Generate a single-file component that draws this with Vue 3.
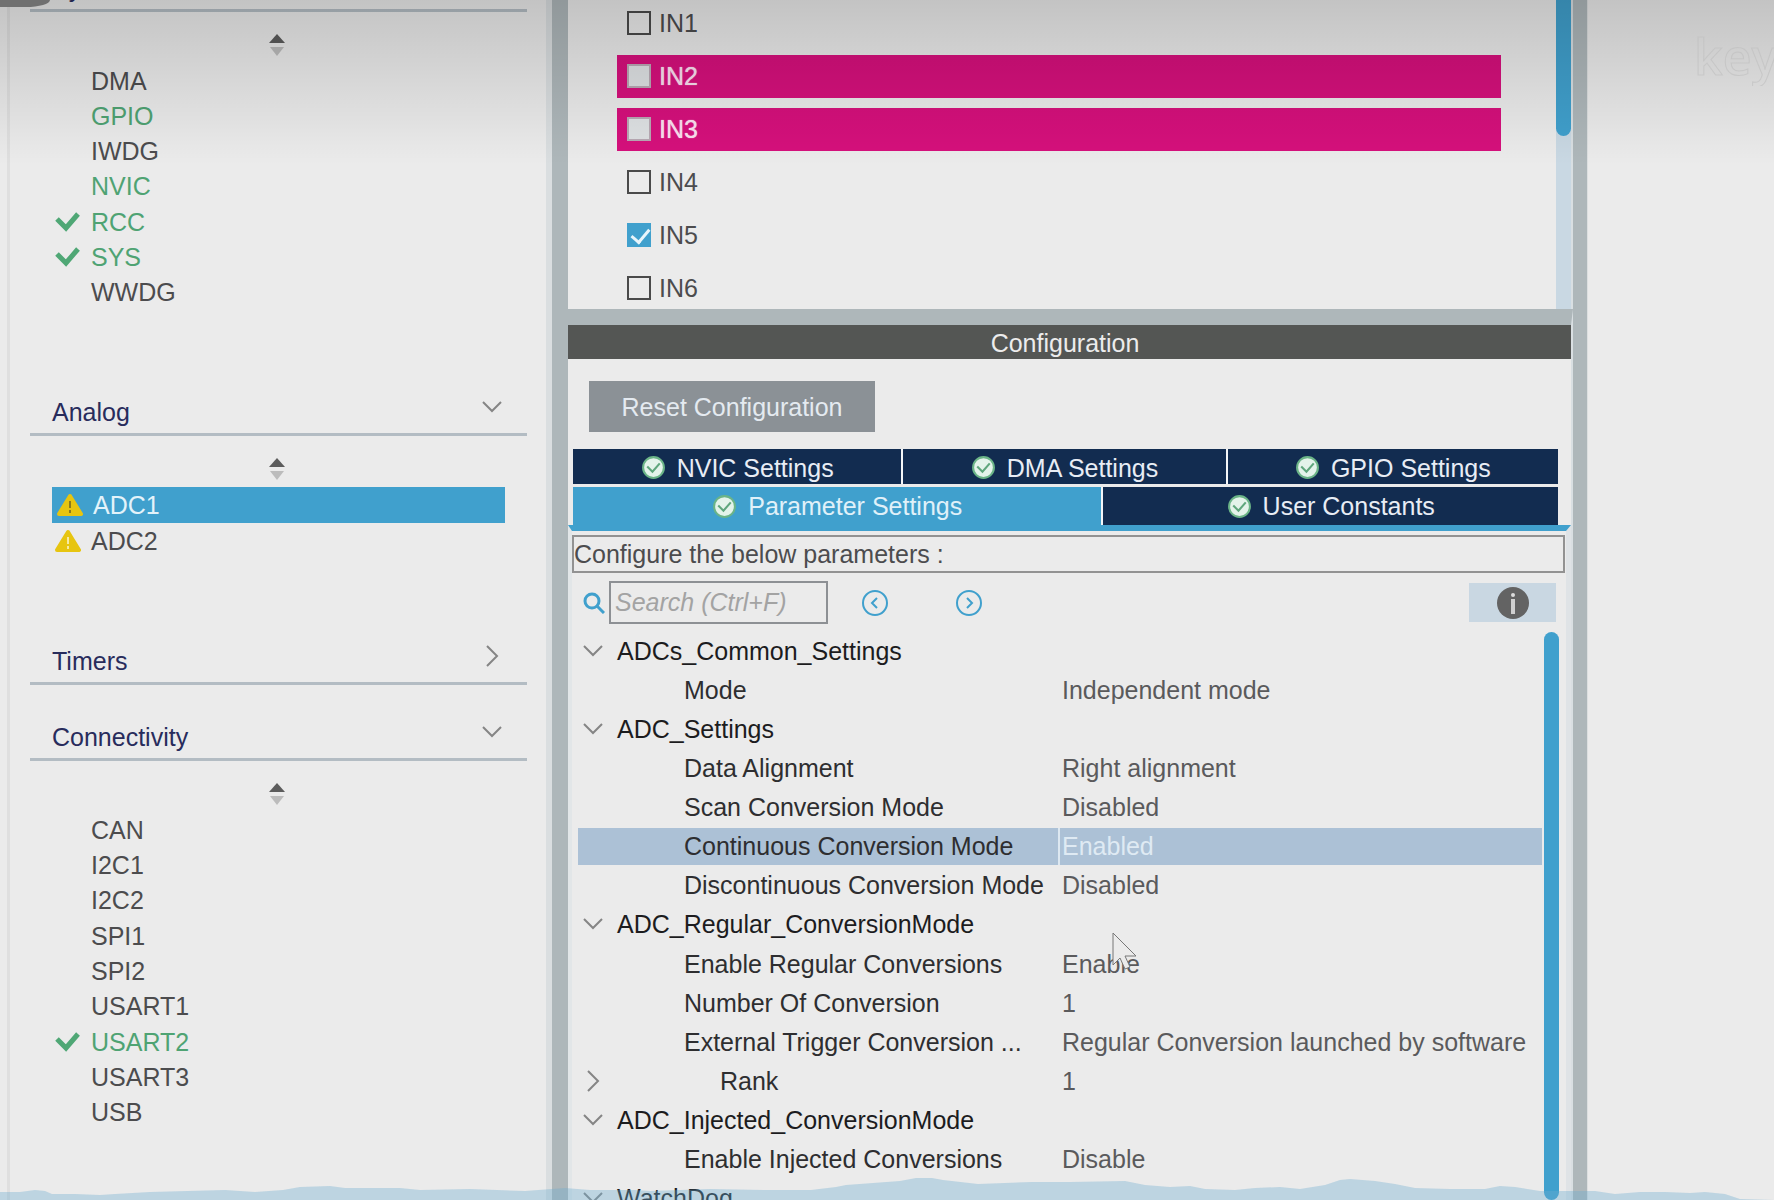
<script setup>
import { ref } from 'vue'

const sections = [
  {
    name: 'System Core',
    open: true,
    clipped: true,
    items: [
      { name: 'DMA' },
      { name: 'GPIO', state: 'used' },
      { name: 'IWDG' },
      { name: 'NVIC', state: 'used' },
      { name: 'RCC', state: 'used', icon: 'check' },
      { name: 'SYS', state: 'used', icon: 'check' },
      { name: 'WWDG' },
    ],
  },
  {
    name: 'Analog',
    open: true,
    items: [
      { name: 'ADC1', icon: 'warning', state: 'selected' },
      { name: 'ADC2', icon: 'warning' },
    ],
  },
  { name: 'Timers', open: false, items: [] },
  {
    name: 'Connectivity',
    open: true,
    items: [
      { name: 'CAN' },
      { name: 'I2C1' },
      { name: 'I2C2' },
      { name: 'SPI1' },
      { name: 'SPI2' },
      { name: 'USART1' },
      { name: 'USART2', state: 'used', icon: 'check' },
      { name: 'USART3' },
      { name: 'USB' },
    ],
  },
]

const channels = ref([
  { name: 'IN1', on: false },
  { name: 'IN2', on: false, conflict: true },
  { name: 'IN3', on: false, conflict: true },
  { name: 'IN4', on: false },
  { name: 'IN5', on: true },
  { name: 'IN6', on: false },
])

const tabRows = [
  [{ name: 'NVIC Settings' }, { name: 'DMA Settings' }, { name: 'GPIO Settings' }],
  [{ name: 'Parameter Settings', active: true }, { name: 'User Constants' }],
]

const search = ref('')

const params = [
  { name: 'ADCs_Common_Settings', kind: 'group', arrow: 'down' },
  { name: 'Mode', value: 'Independent mode' },
  { name: 'ADC_Settings', kind: 'group', arrow: 'down' },
  { name: 'Data Alignment', value: 'Right alignment' },
  { name: 'Scan Conversion Mode', value: 'Disabled' },
  { name: 'Continuous Conversion Mode', value: 'Enabled', selected: true },
  { name: 'Discontinuous Conversion Mode', value: 'Disabled' },
  { name: 'ADC_Regular_ConversionMode', kind: 'group', arrow: 'down' },
  { name: 'Enable Regular Conversions', value: 'Enable' },
  { name: 'Number Of Conversion', value: '1' },
  { name: 'External Trigger Conversion ...', value: 'Regular Conversion launched by software' },
  { name: 'Rank', value: '1', kind: 'nested', arrow: 'right' },
  { name: 'ADC_Injected_ConversionMode', kind: 'group', arrow: 'down' },
  { name: 'Enable Injected Conversions', value: 'Disable' },
  { name: 'WatchDog', kind: 'group', arrow: 'down' },
]
</script>

<template>
  <div class="app">
    <nav class="sidebar">
      <section v-for="s in sections" :key="s.name">
        <button class="section-head" :class="{ clipped: s.clipped }" :aria-expanded="s.open">
          <span>{{ s.name }}</span>
          <svg v-if="s.open" class="arrow" viewBox="0 0 22 22"><path d="M2 6 L11 15 L20 6" /></svg>
          <svg v-else class="arrow" viewBox="0 0 22 22"><path d="M6 1 L16 11 L6 21" /></svg>
        </button>
        <template v-if="s.open">
          <div class="sorter">
            <button aria-label="Sort">
              <svg viewBox="0 0 16 22"><path d="M8 0 L16 9 H0 Z" fill="#5c5c5c" /><path d="M8 22 L1 13 H15 Z" fill="#bcbcbc" /></svg>
            </button>
          </div>
          <ul class="items" :class="'rows-' + s.items.length">
            <li v-for="i in s.items" :key="i.name">
              <button class="item" :class="i.state">
                <span class="mark">
                  <svg v-if="i.icon === 'check'" viewBox="0 0 26 22"><path d="M2 8 L11 17 L23 3" fill="none" stroke="#4fa775" stroke-width="5" /></svg>
                  <svg v-if="i.icon === 'warning'" viewBox="0 0 26 22">
                    <path d="M13 2 L24 20 H2 Z" fill="#e7c510" stroke="#e7c510" stroke-width="4" stroke-linejoin="round" />
                    <path d="M13 7 V14 M13 16 V19" :stroke="i.state ? '#8b7a1d' : '#f6eaa6'" stroke-width="2" />
                  </svg>
                </span>
                {{ i.name }}
              </button>
            </li>
          </ul>
        </template>
      </section>
    </nav>

    <main class="center">
      <section class="mode">
        <div class="channels">
          <div v-for="c in channels" :key="c.name" class="channel">
            <label :class="{ conflict: c.conflict }">
              <input v-model="c.on" type="checkbox" :disabled="c.conflict" />
              {{ c.name }}
            </label>
          </div>
        </div>
        <div class="mode-scroll"><div class="mode-thumb"></div></div>
      </section>

      <section class="config">
        <h2>Configuration</h2>
        <div class="config-body">
          <button class="reset">Reset Configuration</button>
          <div class="tabs">
            <div v-for="(row, r) in tabRows" :key="r" class="tab-row" :class="'tab-row-' + r">
              <button v-for="t in row" :key="t.name" class="tab" :class="{ active: t.active }">
                <svg viewBox="0 0 24 24">
                  <circle cx="12" cy="12" r="10" fill="#e4f3ea" stroke="#6bb487" stroke-width="2" />
                  <path d="M6 11 L11 16 L18 8" fill="none" stroke="#5fa67c" stroke-width="2" />
                </svg>
                {{ t.name }}
              </button>
            </div>
          </div>
          <div class="inner">
            <p class="hint">Configure the below parameters :</p>
            <div class="toolbar">
              <label for="param-search" aria-label="Search">
                <svg class="lens" viewBox="0 0 22 22"><circle cx="9" cy="9" r="7" /><path d="M14 14 L21 21" /></svg>
              </label>
              <input id="param-search" v-model="search" type="text" placeholder="Search (Ctrl+F)" />
              <button class="step prev" aria-label="Previous">
                <svg viewBox="0 0 26 26"><circle cx="13" cy="13" r="12" /><path d="M15 8 L10 13 L15 18" /></svg>
              </button>
              <button class="step next" aria-label="Next">
                <svg viewBox="0 0 26 26"><circle cx="13" cy="13" r="12" /><path d="M11 8 L16 13 L11 18" /></svg>
              </button>
              <button class="info" aria-label="Information">
                <svg viewBox="0 0 32 32">
                  <circle cx="16" cy="16" r="16" fill="#636363" />
                  <circle cx="16" cy="8" r="2" fill="#dcdcdc" />
                  <path d="M16 12 V27" stroke="#d0d0d0" stroke-width="4" />
                </svg>
              </button>
            </div>
            <div class="tree">
              <table>
                <colgroup><col class="col-name" /><col /></colgroup>
                <tbody>
                  <tr v-for="p in params" :key="p.name" :class="{ selected: p.selected }">
                    <td :class="p.kind">
                      <div class="cell">
                        <span class="twist">
                          <svg v-if="p.arrow === 'down'" class="arrow" viewBox="0 0 22 22"><path d="M2 6 L11 15 L20 6" /></svg>
                          <svg v-if="p.arrow === 'right'" class="arrow" viewBox="0 0 22 22"><path d="M6 1 L16 11 L6 21" /></svg>
                        </span>
                        <span class="label">{{ p.name }}</span>
                      </div>
                    </td>
                    <td class="value"><div class="cell">{{ p.value }}</div></td>
                  </tr>
                </tbody>
              </table>
              <div class="tree-thumb"></div>
            </div>
          </div>
        </div>
      </section>
    </main>

    <aside class="right"></aside>

    <svg class="cursor" viewBox="0 0 26 40"><path d="M1 1 V33 L8 26 L13 37 L18 35 L13 24 H24 Z" fill="#ebebeb" stroke="#777" stroke-width="1" /></svg>
    <div class="shade"></div>
    <div class="corner"></div>
    <div class="watermark">key</div>
    <svg class="wave" viewBox="0 0 1774 24" preserveAspectRatio="none">
      <path d="M0 16 L20 16 L35 14 L45 15 L52 18 L75 18 L100 19 L115 18 L150 16 L225 14 L255 16 L283 14 L300 11 L330 10 L345 12 L400 12 L420 14 L470 13 L525 15 L565 12 L590 14 L635 14 L650 15 L710 13 L766 14 L811 14 L836 11 L846 9 L900 5 L916 2 L932 2 L943 4 L978 8 L1032 6 L1070 6 L1125 5 L1145 9 L1170 11 L1190 10 L1205 13 L1235 14 L1255 12 L1280 11 L1300 13 L1325 9 L1340 4 L1350 3 L1375 5 L1395 8 L1415 12 L1450 13 L1485 13 L1500 10 L1515 11 L1540 15 L1595 15 L1615 18 L1640 16 L1665 16 L1690 17 L1705 16 L1725 18 L1740 23 L1774 24 H0 Z" fill="#6dabd1" fill-opacity=".36" />
    </svg>
  </div>
</template>

<style>
body {
  margin: 0;
  background: #ebebeb;
}
</style>

<style scoped>
.app,
.app * {
  box-sizing: border-box;
}
.app {
  position: relative;
  display: grid;
  grid-template-columns: minmax(0, 552fr) minmax(0, 1035fr) minmax(0, 187fr);
  height: 100vh;
  overflow: hidden;
  background: #ebebeb;
  color: #4c4c4e;
  font-family: "Liberation Sans", Arial, sans-serif;
  font-size: 25px;
  line-height: 30px;
}
button {
  padding: 0;
  border: 0;
  background: none;
  color: inherit;
  font: inherit;
}
svg {
  display: block;
}
.arrow {
  width: 22px;
  height: 22px;
  fill: none;
  stroke: #858585;
  stroke-width: 2;
}

/* sidebar */
.sidebar {
  margin-left: 7px;
  padding: 0 19px 0 20px;
  border-left: 3px solid #dfdfdf;
  border-right: 6px solid #dadee0;
  overflow: hidden;
}
.section-head {
  display: flex;
  justify-content: space-between;
  align-items: flex-end;
  width: 100%;
  height: 76px;
  padding: 0 24px 6px 22px;
  border-bottom: 3px solid #b3bcc3;
  color: #282c5c;
  overflow: hidden;
}
.section-head.clipped {
  height: 12px;
}
.section-head .arrow {
  margin-bottom: 9px;
}
.sorter {
  display: flex;
  justify-content: center;
  align-items: flex-start;
  height: 51px;
  padding: 22px 4px 0 0;
}
.sorter svg {
  width: 16px;
  height: 22px;
}
.items {
  display: grid;
  grid-auto-rows: 1fr;
  margin: 0 22px 50px;
  padding: 0;
  list-style: none;
}
.rows-7 { height: 247px; }
.rows-2 { height: 72px; }
.rows-9 { height: 318px; }
.item {
  display: flex;
  align-items: center;
  width: 100%;
  height: 100%;
  padding-left: 3px;
}
.item .mark {
  width: 36px;
}
.item .mark svg {
  width: 26px;
  height: 24px;
}
.item.used { color: #4fa373; }
.item.selected {
  padding-left: 5px;
  background: #40a0cd;
  color: #e3f3fa;
}

/* mode panel */
.center {
  display: flex;
  flex-direction: column;
  min-width: 0;
  height: 100vh;
  border-left: 16px solid #aeb7ba;
  border-right: 14px solid #aeb7ba;
}
.mode {
  display: flex;
  justify-content: space-between;
  flex: 0 0 309px;
  border-right: 2px solid #d9dfe2;
  overflow: hidden;
}
.channels {
  display: grid;
  grid-auto-rows: 1fr;
  flex: 1;
  height: 317px;
  margin: -3px 55px 0 49px;
}
.channel {
  display: flex;
  align-items: center;
}
.channel label {
  display: flex;
  align-items: center;
  gap: 8px;
  width: 100%;
  height: 43px;
  padding-left: 10px;
}
.channel input {
  appearance: none;
  position: relative;
  flex: none;
  width: 24px;
  height: 24px;
  margin: 0;
  border: 2px solid #4a4a4a;
}
.channel input:checked {
  border-color: #40a0cd;
  background: #40a0cd;
}
.channel input:checked::after {
  content: "";
  position: absolute;
  left: 6px;
  top: 0;
  width: 8px;
  height: 15px;
  border: solid #e8f5fb;
  border-width: 0 3px 3px 0;
  rotate: 40deg;
}
.channel .conflict {
  background: #d6107c;
  color: #fbe0ef;
  text-shadow: 0 0 1px #fbe0ef;
}
.channel .conflict input {
  border-color: #b9a9b4;
  background: #dfe2e4;
}
.mode-scroll {
  width: 15px;
  background: #c9d8e3;
}
.mode-thumb {
  height: 136px;
  border-radius: 0 0 8px 8px;
  background: #40a0cd;
}

/* configuration panel */
.config {
  display: flex;
  flex-direction: column;
  flex: 1;
  min-height: 0;
  border-top: 16px solid #aeb7ba;
  border-right: 2px solid #d9dfe2;
}
h2 {
  margin: 0;
  padding: 3px 9px 1px 0;
  background: #545654;
  color: #ececec;
  font-size: 25px;
  font-weight: 400;
  text-align: center;
}
.config-body {
  display: flex;
  flex-direction: column;
  align-items: flex-start;
  flex: 1;
  min-height: 0;
}
.reset {
  width: 286px;
  height: 51px;
  margin: 22px 0 17px 21px;
  background: #8b9196;
  color: #e4eaf0;
}
.tabs {
  display: flex;
  flex-direction: column;
  gap: 3px;
  width: 100%;
  padding: 0 13px 0 5px;
}
.tab-row {
  display: grid;
  gap: 2px;
  background: #f4f6f8;
}
.tab-row-0 { grid-template-columns: 328fr 322fr 330fr; }
.tab-row-1 { grid-template-columns: 529fr 455fr; }
.tab {
  display: flex;
  justify-content: center;
  align-items: center;
  gap: 11px;
  height: 35px;
  padding-top: 2px;
  background: #122c50;
  color: #e8edf5;
}
.tab-row-1 .tab {
  height: 38px;
  padding-top: 0;
}
.tab.active {
  background: #40a0cd;
  color: #e0f1f9;
}
.tab svg {
  width: 25px;
  height: 25px;
}
.inner {
  display: flex;
  flex-direction: column;
  flex: 1;
  width: 100%;
  min-height: 0;
  padding: 4px 1px 0 0;
  border-top: 6px solid #40a0cd;
  border-left: 4px solid #e2e6e8;
  border-right: 5px solid #dfe3e6;
}
.hint {
  margin: 0;
  padding: 2px 0;
  border: 2px solid #929292;
}
.toolbar {
  display: flex;
  align-items: center;
  height: 59px;
  padding: 0 9px 0 11px;
}
.lens {
  width: 22px;
  height: 22px;
  fill: none;
  stroke: #40a0cd;
  stroke-width: 3;
}
.toolbar input {
  width: 219px;
  height: 43px;
  margin-left: 4px;
  padding: 0 4px;
  border: 2px solid #8d9094;
  border-radius: 0;
  background: transparent;
  font: inherit;
}
.toolbar input::placeholder {
  color: #a3a3a3;
  font-style: italic;
  opacity: 1;
}
.step svg {
  width: 26px;
  height: 26px;
  fill: none;
  stroke: #40a0cd;
  stroke-width: 2;
}
.prev { margin-left: 34px; }
.next { margin-left: 68px; }
.info {
  display: flex;
  justify-content: center;
  align-items: center;
  width: 87px;
  height: 39px;
  margin-left: auto;
  background: #c9d7e2;
}
.info svg {
  width: 32px;
  height: 32px;
}
.tree {
  display: flex;
  align-items: flex-start;
  gap: 2px;
  flex: 1;
  min-height: 0;
  padding: 0 6px;
  overflow: hidden;
}
table {
  flex: 1;
  height: 587px;
  border-collapse: collapse;
  table-layout: fixed;
}
.col-name { width: 50%; }
td {
  padding: 0 0 2px;
  white-space: nowrap;
}
td:first-child .cell { border-right: 2px solid transparent; }
.cell {
  display: flex;
  align-items: center;
  height: 37px;
}
.twist { flex: 0 0 106px; padding-left: 4px; }
.group .twist { flex-basis: 39px; }
.nested .twist { flex-basis: 142px; }
.label { color: #2e2e30; }
.group .label { color: #1c1c1e; }
.value .cell {
  padding-left: 2px;
  color: #5a5a5c;
}
.selected .cell { background: #acc1d6; }
.selected td:first-child .cell { border-right-color: #dde8f1; }
.selected .value .cell { color: #dfeaf3; }
.tree-thumb {
  flex: 0 0 15px;
  height: 100%;
  border-radius: 8px;
  background: #40a0cd;
}
.right {
  border-left: 1px solid #dcdfe0;
}

/* overlays */
.cursor {
  position: absolute;
  left: 1112px;
  top: 932px;
  width: 26px;
  height: 40px;
}
.shade {
  position: absolute;
  inset: 0 0 auto;
  height: 165px;
  background: linear-gradient(rgba(0, 0, 0, .17), rgba(0, 0, 0, .02) 145px, transparent);
  pointer-events: none;
}
.corner {
  position: absolute;
  left: 0;
  top: 0;
  width: 50px;
  height: 7px;
  border-bottom-right-radius: 24px 7px;
  background: #707070;
}
.watermark {
  position: absolute;
  left: 1694px;
  top: 26px;
  width: 80px;
  overflow: hidden;
  color: transparent;
  font-family: "Open Sans", sans-serif;
  font-size: 50px;
  font-weight: 600;
  line-height: 60px;
  -webkit-text-stroke: 1px rgba(190, 190, 190, .6);
}
.wave {
  position: absolute;
  left: 0;
  bottom: 0;
  width: 100%;
  height: 24px;
  pointer-events: none;
}
</style>
